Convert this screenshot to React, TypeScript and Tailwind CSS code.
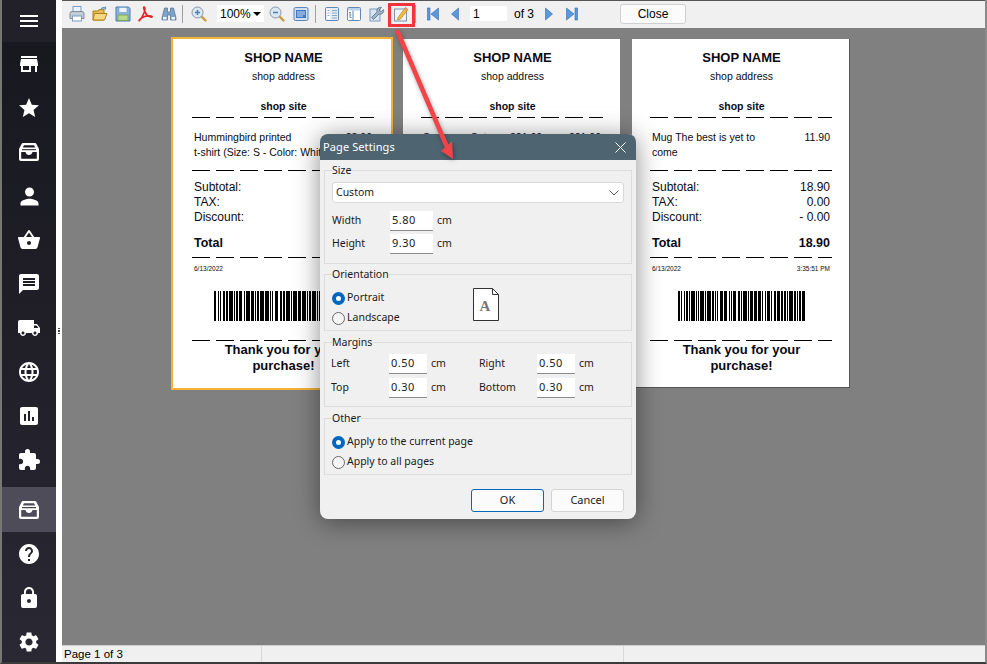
import React from "react";
import {
  MdMenu, MdStore, MdStar, MdPerson, MdShoppingBasket, MdMessage, MdLocalShipping,
  MdLanguage, MdAssessment, MdExtension, MdHelp, MdLock, MdSettings,
} from "react-icons/md";

const Tray = () => (
  <svg width="24" height="24" viewBox="0 0 24 24" fill="#fff">
    <path fillRule="evenodd" d="M6 3h12a1.5 1.5 0 0 1 1.3.8L22 9v10a2 2 0 0 1-2 2H4a2 2 0 0 1-2-2V9l2.700-5.200A1.500 1.500 0 0 1 6 3zM7 5.200 5.800 7.500h12.400L17 5.200zM4.200 12v6.800h15.600V12h-4.300c-.3 1.700-1.800 3-3.500 3s-3.200-1.300-3.500-3z" />
    <rect x="5" y="9.200" width="14" height="1" fill="#1a1a22" />
  </svg>
);

const sideIcons: React.ReactNode[] = [
  <MdStore size={24} color="#fff" />,
  <MdStar size={24} color="#fff" />,
  <Tray />,
  <MdPerson size={27} color="#fff" />,
  <MdShoppingBasket size={24} color="#fff" />,
  <MdMessage size={24} color="#fff" />,
  <MdLocalShipping size={24} color="#fff" />,
  <MdLanguage size={24} color="#fff" />,
  <MdAssessment size={24} color="#fff" />,
  <MdExtension size={24} color="#fff" />,
];
const sideIconsBottom: React.ReactNode[] = [
  <MdHelp size={24} color="#fff" />,
  <MdLock size={24} color="#fff" />,
  <MdSettings size={24} color="#fff" />,
];

const Sidebar = () => (
  <div className="flex h-full w-[54px] shrink-0 flex-col bg-linear-to-b from-[#17171e] to-[#2a2833]">
    <div className="flex h-[42px] shrink-0 items-center justify-center bg-[#22212a]">
      <MdMenu size={24} color="#fff" />
    </div>
    {sideIcons.map((ic, i) => (
      <div key={i} className="flex h-[44px] shrink-0 items-center justify-center">{ic}</div>
    ))}
    <div className="mt-[5px] flex h-[45px] shrink-0 items-center justify-center bg-[#4f4c5a]"><Tray /></div>
    {sideIconsBottom.map((ic, i) => (
      <div key={i} className="flex h-[44px] shrink-0 items-center justify-center">{ic}</div>
    ))}
  </div>
);

const S = ({ children }: { children: React.ReactNode }) => (
  <svg width="16" height="16" viewBox="0 0 16 16" className="block shrink-0">{children}</svg>
);

const Printer = () => (
  <S>
    <rect x="4" y="0.500" width="8" height="6" fill="#eaf2fb" stroke="#7d9cc0" />
    <path d="M1 7.500a2 2 0 0 1 2-2h10a2 2 0 0 1 2 2v5H1z" fill="#c2ccd6" stroke="#7f8c99" />
    <rect x="3.500" y="10" width="9" height="5" fill="#fff" stroke="#7d9cc0" />
  </S>
);
const Folder = () => (
  <S>
    <path d="M1 5h5l1-1.500h5V14H1z" fill="#e9b94f" stroke="#b07f1d" />
    <path d="M1 14l1.500-6.500H15L12.500 14z" fill="#f7d883" stroke="#b07f1d" />
    <path d="M9 3.500c1-2 3-2.500 4.500-1.500M13.500 0.500v2.500H11" fill="none" stroke="#5f9bc4" strokeWidth="1.200" />
  </S>
);
const Save = () => (
  <S>
    <path d="M1 1h12.500L15 2.500V15H1z" fill="#8db4e0" stroke="#4a7ab5" />
    <rect x="4" y="1.500" width="8" height="5" fill="#eef4fb" stroke="#6e94c2" strokeWidth=".6" />
    <rect x="3" y="9" width="10" height="5.500" fill="#b7d98a" stroke="#6d9a45" strokeWidth=".7" />
  </S>
);
const Pdf = () => (
  <S>
    <path d="M6 1c1.500 0 .8 4 0 6-1 2.500-3 6-4.500 7.500-1 .8.300-2 4-3.500 3-1.200 7.500-1.500 8.500-.5s-3 .8-5.500-2C7 6.500 5 1 6 1z" fill="none" stroke="#e0262a" strokeWidth="1.700" />
  </S>
);
const Binoculars = () => (
  <S>
    <path d="M3.500 2h3v4h3V2h3l2.500 10v2H9.500V9h-3v5H1v-2z" fill="#7ea3c9" stroke="#4a6f97" strokeWidth=".7" />
    <rect x="2" y="11" width="3.500" height="2.500" fill="#eaf2fb" />
    <rect x="10.500" y="11" width="3.500" height="2.500" fill="#eaf2fb" />
  </S>
);
const Mag = ({ plus }: { plus: boolean }) => (
  <S>
    <path d="M10 10l4.500 4.500" stroke="#c99a3c" strokeWidth="2.400" strokeLinecap="round" />
    <circle cx="6.500" cy="6.500" r="5.500" fill="#dbe6f1" stroke="#8497ab" />
    <path d="M4 6.500h5" stroke="#4d7fb0" strokeWidth="1.500" />
    {plus && <path d="M6.500 4v5" stroke="#4d7fb0" strokeWidth="1.500" />}
  </S>
);
const FitPage = () => (
  <S>
    <rect x="1" y="1.500" width="14" height="13" rx="1.500" fill="#cfe0f4" stroke="#5d84b5" />
    <rect x="3" y="4" width="10" height="8" fill="#3f78c4" />
    <path d="M4 6h8M4 8h8M4 10h6" stroke="#cfe0f4" />
  </S>
);
const Thumbs = () => (
  <S>
    <rect x="1.500" y="1.500" width="13" height="13" rx="1" fill="#e2ecf8" stroke="#6288b5" />
    <rect x="3" y="3" width="3" height="10" fill="#fff" />
    <path d="M8 4.500h5M8 7h5M8 9.500h5M8 12h5M3.500 4.500h2M3.500 7h2M3.500 9.500h2" stroke="#8aa6c6" />
  </S>
);
const Tree = () => (
  <S>
    <rect x="1.500" y="1.500" width="13" height="13" rx="1" fill="#fff" stroke="#6288b5" />
    <rect x="2" y="2" width="12" height="2.500" fill="#bcd2ea" />
    <path d="M7 4.500v10" stroke="#6288b5" />
    <path d="M3 6.500h2M4 6.500v5h1.500M4 9h1.500" stroke="#7c8ea3" fill="none" />
  </S>
);
const Wrench = () => (
  <S>
    <rect x="1" y="3" width="10" height="12" fill="#d9e5f3" stroke="#7d9cc0" />
    <path d="M14.500 3.500 12 6l-2-2 2.500-2.500a3.500 3.500 0 0 0-4.500 4.500L2.500 11.500 4.500 13.500 10 8a3.500 3.500 0 0 0 4.500-4.500z" fill="#9fb4ca" stroke="#5f7288" strokeWidth=".8" />
  </S>
);
const Pencil = () => (
  <S>
    <rect x="1.500" y="3" width="12" height="12" fill="#eef3f9" stroke="#7c90a8" />
    <path d="M5 11.500 12.500 1.500l2.500 2L7.500 13 4.500 14z" fill="#f1bd3f" stroke="#b58220" strokeWidth=".7" />
    <path d="M12.500 1.500l2.500 2-1 1.200-2.500-2z" fill="#e98a6b" />
  </S>
);
const navFill = "#5b97dc";
const navStroke = "#2f6cb3";
const First = () => (
  <svg width="12" height="16" viewBox="0 0 12 16" className="block shrink-0">
    <rect x="0.500" y="2" width="2.500" height="12" fill={navFill} stroke={navStroke} strokeWidth=".6" />
    <path d="M11.500 2v12L4 8z" fill={navFill} stroke={navStroke} strokeWidth=".6" />
  </svg>
);
const Prev = () => (
  <svg width="8" height="16" viewBox="0 0 8 16" className="block shrink-0">
    <path d="M7.500 2v12L.5 8z" fill={navFill} stroke={navStroke} strokeWidth=".6" />
  </svg>
);
const Next = () => (
  <svg width="8" height="16" viewBox="0 0 8 16" className="block shrink-0">
    <path d="M.5 2v12L7.500 8z" fill={navFill} stroke={navStroke} strokeWidth=".6" />
  </svg>
);
const Last = () => (
  <svg width="12" height="16" viewBox="0 0 12 16" className="block shrink-0">
    <rect x="9" y="2" width="2.500" height="12" fill={navFill} stroke={navStroke} strokeWidth=".6" />
    <path d="M.5 2v12L8 8z" fill={navFill} stroke={navStroke} strokeWidth=".6" />
  </svg>
);
const Sep = ({ cls }: { cls: string }) => <div className={`h-[18px] w-px bg-[#a0a0a0] ${cls}`} />;

const Toolbar = () => (
  <div className="flex h-[28px] shrink-0 items-center border-t border-[#555] bg-[#f0f0f0] pb-[2px] font-['Liberation_Sans',sans-serif] text-[12px] text-black">
    <div className="ml-[7px]"><Printer /></div>
    <div className="ml-[7px]"><Folder /></div>
    <div className="ml-[7px]"><Save /></div>
    <div className="ml-[7px]"><Pdf /></div>
    <div className="ml-[7px]"><Binoculars /></div>
    <Sep cls="ml-[5px]" />
    <div className="ml-[8px]"><Mag plus /></div>
    <div className="ml-[10px] flex h-[17px] w-[47px] items-center bg-white pl-[3px]">
      <span className="flex-1">100%</span>
      <span className="mr-[3px] h-0 w-0 border-x-[4px] border-t-[4px] border-x-transparent border-t-black" />
    </div>
    <div className="ml-[5px]"><Mag plus={false} /></div>
    <div className="ml-[8px]"><FitPage /></div>
    <Sep cls="ml-[6px]" />
    <div className="ml-[8px]"><Thumbs /></div>
    <div className="ml-[6px]"><Tree /></div>
    <div className="ml-[7px]"><Wrench /></div>
    <div className="ml-[8px]"><Pencil /></div>
    <Sep cls="ml-[6px]" />
    <div className="ml-[11px]"><First /></div>
    <div className="ml-[12px]"><Prev /></div>
    <div className="ml-[11px] flex h-[15px] w-[37px] items-center bg-white pl-[3px]">1</div>
    <span className="ml-[7px] w-[31px]">of 3</span>
    <Next />
    <div className="ml-[13px]"><Last /></div>
    <button className="ml-[42px] flex h-[20px] w-[66px] items-center justify-center rounded-[3px] border border-[#d0d0d0] bg-[#fbfbfb] text-[12px] text-black">Close</button>
  </div>
);

const Dashes = () => (
  <div className="flex gap-[6px]">
    {[18, 18, 18, 18, 18, 18, 18, 14].map((w, i) =>
      w === 18 ? <div key={i} className="h-px w-[18px] bg-black" /> : <div key={i} className="h-px w-[14px] bg-black" />
    )}
  </div>
);

const barPattern = [2,1,1,1,1,1,2,1,1,1,3,1,1,1,1,1,3,1,1,1,3,1,2,1,1,1,1,1,3,1,3,1,1,1,1,1,3,1,2,1,1,1,3,1,1,1,3,1,2,1,3,1,1,1,1,1,3,1,1,1,2,1,3,1,1,1,2,1,1,1,3,1,2,1,1,1,1,1,3];
const Barcode = ({ width }: { width: number }) => {
  let x = 0;
  const rects: React.ReactNode[] = [];
  barPattern.forEach((w, i) => {
    if (i % 2 === 0) rects.push(<rect key={i} x={x} y={0} width={w} height={30} fill="#000" />);
    x += w;
  });
  return (
    <svg width={width} height="30" viewBox={`0 0 ${x} 30`} preserveAspectRatio="none" className="mx-auto block" shapeRendering="crispEdges">
      {rects}
    </svg>
  );
};

type R = { lines: string[]; price: string; sub?: string; total?: string; barWidth?: number; time?: boolean; topOnly?: boolean };

const Receipt = ({ lines, price, sub, total, barWidth = 127, time = true, topOnly = false }: R) => (
  <div className="flex flex-col pt-[11px] pr-[16px] pl-[18px] font-['Liberation_Sans',sans-serif] text-[#0a0a14]">
    <div className="text-center text-[13px] leading-[16px] font-bold">SHOP NAME</div>
    <div className="mt-[3px] text-center text-[10.500px] leading-[14px]">shop address</div>
    <div className="mt-[16px] text-center text-[10.500px] leading-[14px] font-bold">shop site</div>
    <div className="mt-[4px]"><Dashes /></div>
    <div className="mt-[12px] flex h-[30px] justify-between pr-[3px] pl-[2px] text-[10.500px] leading-[15px]">
      <div className="whitespace-pre">{lines.map((l) => <div key={l}>{l}</div>)}</div>
      <div>{price}</div>
    </div>
    {!topOnly && (
      <>
        <div className="mt-[10px]"><Dashes /></div>
        <div className="mt-[9px] flex flex-col pr-[3px] pl-[2px] text-[12px] leading-[15px]">
          <div className="flex justify-between"><span>Subtotal:</span>{sub && <span>{sub}</span>}</div>
          <div className="flex justify-between"><span>TAX:</span>{sub && <span>0.00</span>}</div>
          <div className="flex justify-between"><span>Discount:</span>{sub && <span>- 0.00</span>}</div>
        </div>
        <div className="mt-[10px] flex justify-between pr-[3px] pl-[2px] text-[12.500px] leading-[16px] font-bold">
          <span>Total</span>{total && <span>{total}</span>}
        </div>
        <div className="mt-[6px]"><Dashes /></div>
        <div className="mt-[7px] flex h-[8px] justify-between pr-[3px] pl-[2px] text-[6.500px] leading-[8px]">
          <span>6/13/2022</span>{time && <span>3:35:51 PM</span>}
        </div>
        <div className="mt-[18px]"><Barcode width={barWidth} /></div>
        <div className="mt-[19px]"><Dashes /></div>
        <div className="mt-px text-center text-[13px] leading-[16px] font-bold">Thank you for your<br />purchase!</div>
      </>
    )}
  </div>
);

const StatusBar = () => (
  <div className="flex h-[17px] shrink-0 border-t border-[#cfcfcf] bg-[#f0f0f0] font-['Liberation_Sans',sans-serif] text-[11.500px] leading-[17px] text-black">
    <div className="w-[200px] truncate border-r border-[#d8d8d8] pl-[2px]">Page 1 of 3</div>
    <div className="w-[362px] border-r border-[#d8d8d8]" />
    <div className="flex-1" />
  </div>
);

const Radio = ({ on, label }: { on: boolean; label: string }) => (
  <div className="flex h-[20px] items-center gap-[2px]">
    {on ? (
      <span className="flex h-[13px] w-[13px] items-center justify-center rounded-full bg-[#0067c0]">
        <span className="h-[5px] w-[5px] rounded-full bg-white" />
      </span>
    ) : (
      <span className="h-[13px] w-[13px] rounded-full border border-[#6a6a6a] bg-[#f5f5f5]" />
    )}
    <span>{label}</span>
  </div>
);

const Field = ({ label, value, wide }: { label: string; value: string; wide?: boolean }) => (
  <div className="flex h-[20px] items-center">
    <span className="w-[58px]">{label}</span>
    <div className={`flex h-[20px] items-center border-b border-[#8a8a8a] bg-white pl-[2px] text-[11px] tracking-[0.5px] ${wide ? "w-[43px]" : "w-[38px]"}`}>{value}</div>
    <span className="ml-[4px]">cm</span>
  </div>
);

const Group = ({ title, cls, children }: { title: string; cls: string; children: React.ReactNode }) => (
  <fieldset className={`mx-[4px] border border-[#dcdcdc] px-[7px] ${cls}`}>
    <legend className="px-0 text-[10.500px] leading-[11px]">{title}</legend>
    {children}
  </fieldset>
);

const Dialog = () => (
  <div className="absolute top-[134px] left-[318px] flex h-[385px] w-[316px] flex-col overflow-hidden rounded-[8px] bg-[#f0f0f0] font-['Noto_Sans',sans-serif] text-[10.500px] text-[#1a1a1a] shadow-[0_3px_26px_rgba(0,0,0,0.45)]">
    <div className="flex h-[26px] shrink-0 items-center justify-between bg-[#4e6470] pr-[10px] pl-[3px] text-[11px] tracking-[0.1px] text-white">
      <span>Page Settings</span>
      <svg width="11" height="11" viewBox="0 0 11 11"><path d="M.5.5l10 10M10.500.5l-10 10" stroke="#fff" strokeWidth="1" /></svg>
    </div>
    <Group title="Size" cls="mt-[5px] h-[99px]">
      <div className="mt-[6px] flex h-[21px] items-center justify-between rounded-[3px] border border-[#d8d8d8] bg-white pt-px pr-[4px] pl-[3px]">
        <span>Custom</span>
        <svg width="10" height="6" viewBox="0 0 10 6"><path d="M.5.5 5 5 9.500.5" fill="none" stroke="#555" /></svg>
      </div>
      <div className="mt-[8px] flex flex-col gap-[3px]">
        <Field label="Width" value="5.80" wide />
        <Field label="Height" value="9.30" wide />
      </div>
    </Group>
    <Group title="Orientation" cls="mt-[5px] h-[62px]">
      <div className="mt-[8px] flex">
        <div className="w-[141px]">
          <Radio on label="Portrait" />
          <Radio on={false} label="Landscape" />
        </div>
        <svg width="26" height="33" viewBox="0 0 26 33">
          <path d="M.5.5h19l6 6v26H.5z" fill="#fff" stroke="#333" />
          <path d="M19.500.5v6h6" fill="none" stroke="#333" />
          <text x="12" y="23" textAnchor="middle" fontFamily="Liberation Serif, serif" fontSize="15" fontWeight="700" fill="#777">A</text>
        </svg>
      </div>
    </Group>
    <Group title="Margins" cls="mt-[6px] h-[70px]">
      <div className="mt-[6px] -ml-px grid grid-cols-[148px_1fr] gap-y-[4px]">
        <Field label="Left" value="0.50" />
        <Field label="Right" value="0.50" />
        <Field label="Top" value="0.30" />
        <Field label="Bottom" value="0.30" />
      </div>
    </Group>
    <Group title="Other" cls="mt-[6px] h-[62px]">
      <div className="mt-[8px]">
        <Radio on label="Apply to the current page" />
        <Radio on={false} label="Apply to all pages" />
      </div>
    </Group>
    <div className="mt-[14px] flex justify-end gap-[7px] pr-[12px] text-[11px]">
      <button className="flex h-[23px] w-[73px] items-center justify-center rounded-[3px] border border-[#0067c0] bg-[#fbfbfb]">OK</button>
      <button className="flex h-[23px] w-[73px] items-center justify-center rounded-[3px] border border-[#d4d4d4] bg-[#fbfbfb]">Cancel</button>
    </div>
  </div>
);

const Callout = () => (
  <>
    <div className="absolute top-[3px] left-[386px] h-[24px] w-[27px] border-[3px] border-[#f2343c]" />
    <svg width="90" height="140" viewBox="0 0 90 140" className="absolute top-[26px] left-[383px] drop-shadow-[1px_2px_2px_rgba(0,0,0,0.35)]">
      <path d="M12 4 62 121" stroke="#f04448" strokeWidth="4.500" />
      <path d="M68 133 56 125 67 115z" fill="#f04448" />
    </svg>
  </>
);

export default function App() {
  const p1: R = { lines: ["Hummingbird printed", "t-shirt (Size: S - Color: White)"], price: "23.90", barWidth: 140, time: false };
  const p2: R = { lines: ["S              Setup    321.00"], price: "321.00", topOnly: true };
  const p3: R = { lines: ["Mug The best is yet to", "come"], price: "11.90", sub: "18.90", total: "18.90" };
  return (
    <div className="relative flex h-[664px] w-[987px] overflow-hidden border-r-2 border-b-2 border-l-2 border-r-[#8a8a8a] border-b-[#3a3a3a] border-l-[#777] bg-white">
      <Sidebar />
      <div className="flex h-full w-[6px] shrink-0 flex-col items-center justify-center gap-[1px] bg-white">
        <span className="h-[1.500px] w-[2px] bg-[#444]" />
        <span className="h-[1.500px] w-[2px] bg-[#444]" />
        <span className="h-[1.500px] w-[2px] bg-[#444]" />
      </div>
      <div className="flex min-w-0 flex-1 flex-col">
        <Toolbar />
        <div className="flex flex-1 items-start bg-[#808080] pt-[9px] pl-[109px]">
          <div className="h-[353px] w-[222px] shrink-0 border-2 border-[#f3b338] bg-white pl-px">
            <Receipt {...p1} />
          </div>
          <div className="mt-[2px] ml-[10px] h-[349px] w-[217px] shrink-0 bg-white">
            <Receipt {...p2} />
          </div>
          <div className="mt-[2px] ml-[12px] h-[349px] w-[218px] shrink-0 border-r border-b border-[#555] bg-white">
            <Receipt {...p3} />
          </div>
        </div>
        <StatusBar />
      </div>
      <Dialog />
      <Callout />
    </div>
  );
}
